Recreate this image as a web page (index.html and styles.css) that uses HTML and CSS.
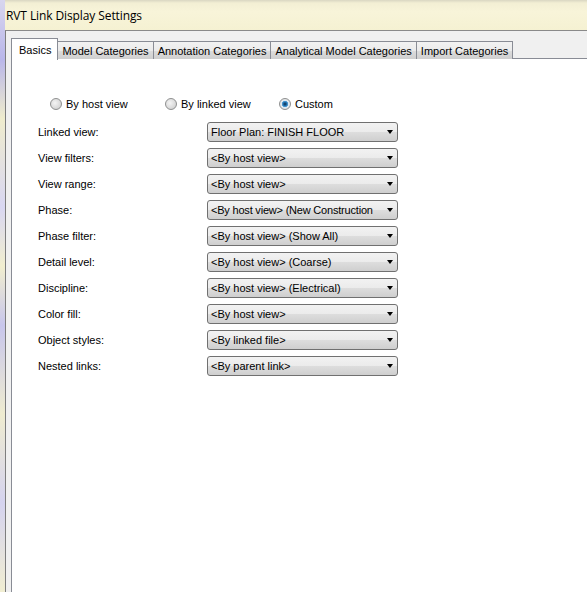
FILE: index.html
```html
<!DOCTYPE html>
<html>
<head>
<meta charset="utf-8">
<link rel="stylesheet" href="styles.css">
</head>
<body>
<div class="screen">
  <div class="edge"></div>
  <div class="window">
    <div class="titlebar"><span class="title">RVT Link Display Settings</span></div>
    <div class="client">
      <div class="tabs">
        <div class="tab selected">Basics</div>
        <div class="tab">Model Categories</div>
        <div class="tab">Annotation Categories</div>
        <div class="tab">Analytical Model Categories</div>
        <div class="tab">Import Categories</div>
      </div>
      <div class="panel">
        <div class="radios">
          <label class="radio"><span class="dot"></span>By host view</label>
          <label class="radio"><span class="dot"></span>By linked view</label>
          <label class="radio"><span class="dot on"></span>Custom</label>
        </div>
        <div class="form">
          <div class="lbl">Linked view:</div><div class="combo"><span class="val">Floor Plan: FINISH FLOOR</span><span class="arrow"></span></div>
          <div class="lbl">View filters:</div><div class="combo"><span class="val">&lt;By host view&gt;</span><span class="arrow"></span></div>
          <div class="lbl">View range:</div><div class="combo"><span class="val">&lt;By host view&gt;</span><span class="arrow"></span></div>
          <div class="lbl">Phase:</div><div class="combo"><span class="val tight">&lt;By host view&gt; (New Construction</span><span class="arrow"></span></div>
          <div class="lbl">Phase filter:</div><div class="combo"><span class="val">&lt;By host view&gt; (Show All)</span><span class="arrow"></span></div>
          <div class="lbl">Detail level:</div><div class="combo"><span class="val">&lt;By host view&gt; (Coarse)</span><span class="arrow"></span></div>
          <div class="lbl">Discipline:</div><div class="combo"><span class="val">&lt;By host view&gt; (Electrical)</span><span class="arrow"></span></div>
          <div class="lbl">Color fill:</div><div class="combo"><span class="val">&lt;By host view&gt;</span><span class="arrow"></span></div>
          <div class="lbl">Object styles:</div><div class="combo"><span class="val">&lt;By linked file&gt;</span><span class="arrow"></span></div>
          <div class="lbl">Nested links:</div><div class="combo"><span class="val">&lt;By parent link&gt;</span><span class="arrow"></span></div>
        </div>
      </div>
    </div>
  </div>
</div>
</body>
</html>
```
FILE: styles.css
```css
html, body {
  margin: 0;
  padding: 0;
}
body {
  width: 587px;
  height: 592px;
  overflow: hidden;
  font-family: "Liberation Sans", Arial, sans-serif;
  font-size: 11px;
  color: #000;
}
.screen {
  display: flex;
  width: 587px;
  height: 592px;
  background: #f6f2d2;
}
.edge {
  width: 5px;
  flex: none;
  background: linear-gradient(180deg, #d8d6ee 0%, #b9b6ea 10%, #efeccd 20%, #d9d7f2 35%, #f1eecf 45%, #c8c6ec 55%, #efecd0 70%, #d5d3ef 85%, #f1eed2 100%);
}
.window {
  flex: 1;
  display: flex;
  flex-direction: column;
  min-width: 0;
}
.titlebar {
  height: 30px;
  flex: none;
  box-sizing: border-box;
  padding: 7px 0 0 1px;
  background: linear-gradient(180deg, #d9d6c2 0px, #f3efd4 3px, #f8f4d9 12px, #f5f1d2 30px);
  font-family: "Open Sans", "Liberation Sans", sans-serif;
  font-size: 12px;
}
.title {
  letter-spacing: -0.1px;
}
.client {
  flex: 1;
  display: flex;
  flex-direction: column;
  background: #f0f0f0;
  border-top: 1px solid #8a8a8a;
  border-left: 1px solid #7e7e7e;
  padding: 7px 0 0 5px;
}
.tabs {
  display: flex;
  align-items: flex-end;
  height: 21px;
  flex: none;
  position: relative;
  z-index: 1;
  margin-bottom: -1px;
}
.tab {
  height: 18px;
  box-sizing: border-box;
  border: 1px solid #898c95;
  border-bottom: none;
  border-left: none;
  padding: 1px 4px 0 4px;
  line-height: 17px;
  background: linear-gradient(180deg, #f2f2f2 0%, #ebebeb 50%, #dddddd 51%, #cfcfcf 100%);
  white-space: nowrap;
}
.tab.selected {
  height: 22px;
  border-left: 1px solid #898c95;
  background: #fff;
  padding: 3px 6px 0 7px;
  line-height: 16px;
  margin-bottom: -1px;
}
.panel {
  flex: 1;
  background: #fff;
  border-top: 1px solid #898c95;
  border-left: 1px solid #898c95;
  padding: 38px 0 0 26px;
}
.radios {
  display: grid;
  grid-template-columns: 115px 114px auto;
  margin-left: 12px;
  height: 14px;
  align-items: center;
}
.radio {
  display: flex;
  align-items: center;
  gap: 4px;
}
.dot {
  width: 10px;
  height: 10px;
  border-radius: 50%;
  border: 1px solid #8e8f8f;
  background: radial-gradient(circle at 40% 40%, #f4f4f4 0%, #d6d6d6 70%, #c4c4c4 100%);
}
.dot.on {
  background: radial-gradient(circle at 50% 50%, #0d2a45 0%, #2474b3 28%, #5aa4d8 42%, #dfe9f2 50%, #e6e6e6 70%, #cfcfcf 100%);
}
.form {
  display: grid;
  grid-template-columns: 169px 191px;
  grid-auto-rows: 20px;
  row-gap: 6px;
  margin-top: 11px;
  align-items: center;
}
.combo {
  height: 20px;
  box-sizing: border-box;
  border: 1px solid #707070;
  border-radius: 3px;
  background: linear-gradient(180deg, #f2f2f2 0%, #ebebeb 50%, #dddddd 51%, #cfcfcf 100%);
  display: flex;
  align-items: center;
  padding: 0 0 0 3px;
  position: relative;
}
.val {
  white-space: nowrap;
}
.val.tight {
  letter-spacing: -0.2px;
}
.arrow {
  position: absolute;
  right: 4px;
  top: 7px;
  width: 0;
  height: 0;
  border-left: 3.5px solid transparent;
  border-right: 3.5px solid transparent;
  border-top: 4px solid #000;
}
```
